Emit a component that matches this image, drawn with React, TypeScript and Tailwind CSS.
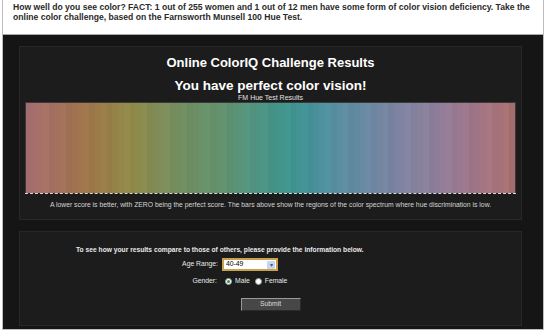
const stops: [number, string][] = [
  [0, "#a87070"],
  [0.05, "#a47060"],
  [0.11, "#a0744c"],
  [0.15, "#9a7c48"],
  [0.21, "#908a48"],
  [0.27, "#808c58"],
  [0.33, "#6e8e62"],
  [0.4, "#62926e"],
  [0.46, "#529480"],
  [0.54, "#3e948e"],
  [0.58, "#44929a"],
  [0.64, "#5a8ea2"],
  [0.7, "#6a88a2"],
  [0.76, "#7c84a2"],
  [0.83, "#8c809c"],
  [0.89, "#9a7890"],
  [0.95, "#a47480"],
  [1, "#a87070"],
];

const hex = (c: string) => [1, 3, 5].map((i) => parseInt(c.slice(i, i + 2), 16));

// color of the spectrum at position t (0..1)
const colorAt = (t: number, shade: number) => {
  let i = 0;
  while (i < stops.length - 2 && stops[i + 1][0] < t) i++;
  const [t0, c0] = stops[i];
  const [t1, c1] = stops[i + 1];
  const f = (t - t0) / (t1 - t0 || 1);
  const a = hex(c0);
  const b = hex(c1);
  const rgb = a.map((v, k) => Math.round(Math.min(255, (v + (b[k] - v) * f) * shade)));
  return `rgb(${rgb.join(",")})`;
};

const BARS = 85;
const bars = Array.from({ length: BARS }, (_, i) => {
  const shade = 1 + (((i * 37) % 7) - 3) * 0.008;
  return colorAt(i / (BARS - 1), shade);
});

const HueChart = () => (
  <div className="mx-[5px] mt-[1px]">
    <div className="flex h-[91px] border-t border-x border-[#3a3a3a]">
      {bars.map((c, i) => (
        <div key={i} className="flex-1 h-full" style={{ backgroundColor: c }} />
      ))}
    </div>
    <div className="border-t border-dashed border-[#d8d8d8]" />
  </div>
);

const Radio = ({ checked, label }: { checked?: boolean; label: string }) => (
  <label className="flex items-center gap-[3px]">
    <span className="w-[7px] h-[7px] rounded-full bg-white border border-[#9a9a9a] flex items-center justify-center">
      {checked && <span className="w-[3px] h-[3px] rounded-full bg-[#2f9a3a]" />}
    </span>
    <span>{label}</span>
  </label>
);

export default function App() {
  return (
    <div className="w-[546px] h-[330px] bg-white overflow-hidden font-['Liberation_Sans',Arial,sans-serif]">
      <div className="mx-[2px] h-full border-x border-[#bdbdbd] flex flex-col">
        {/* Intro */}
        <p className="h-[34px] px-[10px] pt-[3px] text-[8.6px] leading-[9.5px] font-bold text-[#2a2a2a]">
          How well do you see color? FACT: 1 out of 255 women and 1 out of 12 men have some form of color
          vision deficiency. Take the online color challenge, based on the Farnsworth Munsell 100 Hue Test.
        </p>

        {/* Dark area */}
        <div className="flex-1 bg-[#151515] border-t border-b border-t-[#a8a8a8] border-b-[#b8c0c8] pl-[16px] pr-[21px] pt-[11px]">
          {/* Results */}
          <div className="bg-[#1c1c1c] border border-[#282828] pt-[8px] pb-[9px] text-center">
            <h1 className="text-[13px] leading-[15px] font-bold text-white">Online ColorIQ Challenge Results</h1>
            <h2 className="mt-[8px] text-[13.5px] leading-[16px] font-bold text-white">You have perfect color vision!</h2>
            <p className="text-[7px] leading-[7px] text-[#e0e0e0]">FM Hue Test Results</p>
            <HueChart />
            <p className="mt-[6px] text-[6.8px] leading-[10px] text-[#d4d4d4]">
              A lower score is better, with ZERO being the perfect score. The bars above show the regions of the color
              spectrum where hue discrimination is low.
            </p>
          </div>

          {/* Compare form */}
          <div className="mt-[11px] h-[95px] bg-[#1c1c1c] border border-[#282828] pt-[13px] text-[6.8px] text-[#e8e8e8]">
            <p className="pl-[56px] leading-[9px] font-bold text-[6.7px]">
              To see how your results compare to those of others, please provide the information below.
            </p>
            <div className="mt-[4px] flex items-center">
              <span className="w-[202px] text-right pr-[4px]">Age Range:</span>
              <div className="w-[56px] h-[13px] bg-white border-2 border-[#c9a24e] flex items-center justify-between pl-[2px] pr-[1px] text-black">
                <span>40-49</span>
                <span className="w-[8px] h-[8px] bg-[#c6d6ee] rounded-[1px] flex items-center justify-center text-[#3c5f94] text-[6px] leading-none">
                  ▾
                </span>
              </div>
            </div>
            <div className="mt-[5px] flex items-center leading-[10px]">
              <span className="w-[202px] text-right pr-[5px]">Gender:</span>
              <div className="ml-[3px] flex items-center gap-[5px]">
                <Radio checked label="Male" />
                <Radio label="Female" />
              </div>
            </div>
            <div className="mt-[12px] flex justify-center">
              <button className="w-[60px] h-[13px] bg-[#474747] border border-[#9a9a9a] border-r-[#2a2a2a] border-b-[#2a2a2a] text-[6.8px] text-[#dcdcdc] leading-none">
                Submit
              </button>
            </div>
          </div>
        </div>
      </div>
    </div>
  );
}
